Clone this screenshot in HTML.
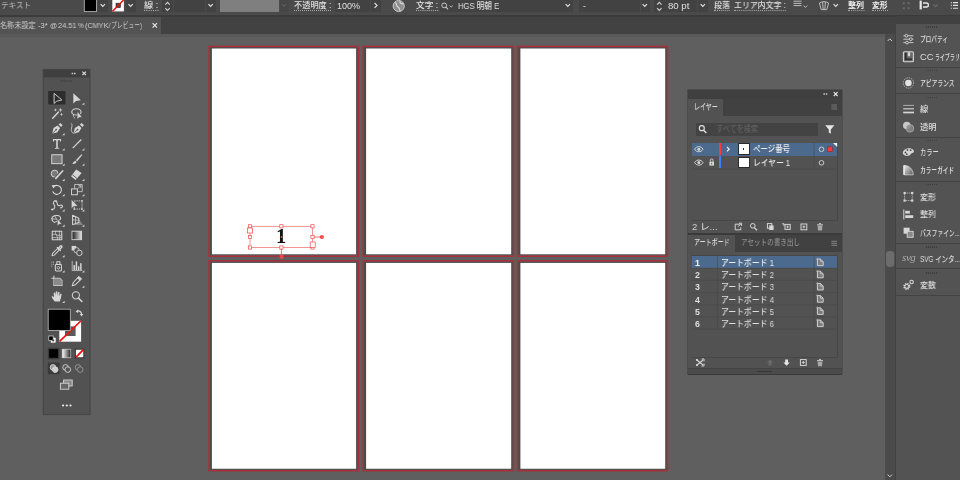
<!DOCTYPE html>
<html>
<head>
<meta charset="utf-8">
<title>Illustrator</title>
<style>
html,body{margin:0;padding:0;}
body{width:960px;height:480px;overflow:hidden;position:relative;background:#5f5f5f;font-family:"Liberation Sans","Noto Sans CJK JP",sans-serif;color:#e0e0e0;font-size:8px;line-height:1;}
.abs{position:absolute;}
.t{position:absolute;white-space:pre;will-change:transform;transform-origin:0 50%;}
#ctrl{left:0;top:0;width:960px;height:16px;background:#4a4a4a;}
#tabbar{left:0;top:16px;width:895px;height:18px;background:#424242;}
#doctab{left:0;top:17px;width:161px;height:17px;background:#535353;}
#understrip{left:0;top:34px;width:885px;height:3px;background:#595959;}
#vscroll{left:885px;top:34px;width:10px;height:446px;background:#4b4b4b;}
#dockgap{left:895px;top:16px;width:65px;height:464px;background:#414141;}
#dock{left:896.3px;top:24px;width:64px;height:456px;background:#535353;}
.u{border-bottom:1px dotted #a8a8a8;height:7.9px;}
</style>
</head>
<body>
<div id="ctrl" class="abs"></div>
<div id="tabbar" class="abs"></div>
<div id="doctab" class="abs"></div>
<div class="abs" style="left:0;top:15.4px;width:960px;height:1.2px;background:#3b3b3b"></div>
<div id="understrip" class="abs"></div>
<div id="vscroll" class="abs"></div>
<div id="dockgap" class="abs"></div>
<div id="dock" class="abs"></div>
<svg class="abs" style="left:0;top:0" width="960" height="480" viewBox="0 0 960 480">
<rect x="209.90" y="47.20" width="147.70" height="208.00" fill="#484b4b"/>
<rect x="209.00" y="46.45" width="149.40" height="209.80" fill="none" stroke="#a92f3b" stroke-width="1.5"/>
<rect x="211.90" y="48.50" width="144.20" height="205.80" fill="#ffffff"/>
<rect x="364.10" y="47.20" width="148.60" height="208.00" fill="#484b4b"/>
<rect x="363.20" y="46.45" width="150.30" height="209.80" fill="none" stroke="#a92f3b" stroke-width="1.5"/>
<rect x="366.10" y="48.50" width="145.10" height="205.80" fill="#ffffff"/>
<rect x="518.40" y="47.20" width="148.30" height="208.00" fill="#484b4b"/>
<rect x="517.50" y="46.45" width="150.00" height="209.80" fill="none" stroke="#a92f3b" stroke-width="1.5"/>
<rect x="520.40" y="48.50" width="144.80" height="205.80" fill="#ffffff"/>
<rect x="209.90" y="261.60" width="147.70" height="208.05" fill="#484b4b"/>
<rect x="209.00" y="260.85" width="149.40" height="209.85" fill="none" stroke="#a92f3b" stroke-width="1.5"/>
<rect x="211.90" y="262.90" width="144.20" height="205.85" fill="#ffffff"/>
<rect x="364.10" y="261.60" width="148.60" height="208.05" fill="#484b4b"/>
<rect x="363.20" y="260.85" width="150.30" height="209.85" fill="none" stroke="#a92f3b" stroke-width="1.5"/>
<rect x="366.10" y="262.90" width="145.10" height="205.85" fill="#ffffff"/>
<rect x="518.40" y="261.60" width="148.30" height="208.05" fill="#484b4b"/>
<rect x="517.50" y="260.85" width="150.00" height="209.85" fill="none" stroke="#a92f3b" stroke-width="1.5"/>
<rect x="520.40" y="262.90" width="144.80" height="205.85" fill="#ffffff"/>
</svg>
<!--FRAME_S--><div id="frame">
<span class="t" style="left:276.4px;top:226.3px;font-family:'Liberation Serif','Noto Serif CJK JP',serif;font-weight:bold;font-size:20.5px;color:#111;line-height:1;">1</span>
<svg class="abs" style="left:240px;top:220px" width="90" height="45" viewBox="240 220 90 45">
<rect x="250" y="226.3" width="62.5" height="21.2" fill="none" stroke="#f04a4a" stroke-width="0.7" opacity="0.85"/><rect x="248.4" y="224.70000000000002" width="3.2" height="3.2" fill="#fff" stroke="#f04a4a" stroke-width="0.7"/><rect x="248.4" y="245.9" width="3.2" height="3.2" fill="#fff" stroke="#f04a4a" stroke-width="0.7"/><rect x="279.79999999999995" y="224.70000000000002" width="3.2" height="3.2" fill="#fff" stroke="#f04a4a" stroke-width="0.7"/><rect x="279.79999999999995" y="245.9" width="3.2" height="3.2" fill="#fff" stroke="#f04a4a" stroke-width="0.7"/><rect x="310.9" y="224.70000000000002" width="3.2" height="3.2" fill="#fff" stroke="#f04a4a" stroke-width="0.7"/><rect x="310.9" y="245.9" width="3.2" height="3.2" fill="#fff" stroke="#f04a4a" stroke-width="0.7"/><rect x="248.4" y="235.4" width="3.2" height="3.2" fill="#fff" stroke="#f04a4a" stroke-width="0.7"/><rect x="310.9" y="235.4" width="3.2" height="3.2" fill="#fff" stroke="#f04a4a" stroke-width="0.7"/><rect x="247.6" y="228" width="4.8" height="5" fill="#fff" stroke="#f04a4a" stroke-width="0.7"/><rect x="310.2" y="242" width="5" height="5.4" fill="#fff" stroke="#f04a4a" stroke-width="0.7"/><path d="M314 237 H320" stroke="#f04a4a" stroke-width="0.8"/><circle cx="321.8" cy="237" r="2.1" fill="#f04a4a"/><path d="M281.4 249 V255" stroke="#f04a4a" stroke-width="0.8"/><rect x="279.8" y="255" width="3.6" height="3.6" fill="#f04a4a"/><circle cx="281.5" cy="237" r="0.9" fill="#f04a4a"/></svg>
</div><!--FRAME_E-->
<!--TOOLS_S--><svg class="abs" style="left:40px;top:66px" width="56" height="354" viewBox="40 66 56 354">
<defs><linearGradient id="tg" x1="0" x2="1" y1="0" y2="0"><stop offset="0" stop-color="#1a1a1a"/><stop offset="1" stop-color="#e8e8e8"/></linearGradient><linearGradient id="tg2" x1="0" x2="1" y1="0" y2="0"><stop offset="0" stop-color="#ffffff"/><stop offset="1" stop-color="#222"/></linearGradient></defs>
<rect x="42.9" y="69" width="47.6" height="346" fill="#555" opacity="0.5"/>
<rect x="43.2" y="69.4" width="46.8" height="345.2" fill="#525252" stroke="#454545" stroke-width="1"/>
<rect x="43.7" y="69.6" width="45.8" height="7.8" fill="#3f3f3f"/>
<path d="M71.6 73.4 h1.6 M74 73.4 h1.6" stroke="#c8c8c8" stroke-width="1.5"/><path d="M82.4 71.6 l3.6 3.6 M86 71.6 l-3.6 3.6" stroke="#e0e0e0" stroke-width="1.2"/>
<path d="M60.5 81 H72" stroke="#3e3e3e" stroke-width="1.6" stroke-dasharray="1 0.8"/>
<rect x="48.2" y="91" width="17.3" height="13.6" rx="0.8" fill="#2d2d2d"/>
<g transform="translate(57.00,98.20)"><g transform="scale(0.97)"><path d="M-3 -5 L-3 5.4 L-0.4 3.2 L5 1.8 Z" fill="none" stroke="#d6d6d6" stroke-width="0.95" stroke-linejoin="round"/></g></g>
<g transform="translate(76.80,98.20)"><g transform="scale(0.97)"><path d="M-3.6 -5.2 L-3.6 5.4 L-0.8 3 L4.2 2 Z" fill="#d6d6d6"/></g><path d="M7.6 4.2 L7.6 6.6 L5.2 6.6 Z" fill="#d6d6d6"/></g>
<g transform="translate(57.00,113.45)"><g transform="scale(0.97)"><path d="M-4.4 5 L1.6 -1.4" stroke="#d6d6d6" stroke-width="1.5" fill="none" stroke-linecap="round"/><path d="M3.6 -5 L3.6 -2.2 M2.2 -3.6 L5 -3.6 M-1.6 -4.4 L-1.6 -2.8 M-2.4 -3.6 L-0.8 -3.6 M4.6 0.2 L4.6 1.8 M3.8 1 L5.4 1" fill="none" stroke="#d6d6d6" stroke-width="0.8" stroke-linejoin="round" stroke-linecap="round"/></g></g>
<g transform="translate(76.80,113.45)"><g transform="scale(0.97)"><ellipse cx="-0.4" cy="-1.6" rx="4.8" ry="3.2" fill="none" stroke="#d6d6d6" stroke-width="1.1" stroke-linejoin="round" stroke-linecap="round"/><path d="M-3.2 0.6 C-4.4 2 -3.4 4 -2 5" fill="none" stroke="#d6d6d6" stroke-width="0.8" stroke-linejoin="round" stroke-linecap="round"/><path d="M0.4 -2 L0.4 6 L2.2 4.2 L5.4 3.6 Z" fill="#d6d6d6" stroke="#525252" stroke-width="0.5"/></g></g>
<g transform="translate(57.00,128.70)"><g transform="scale(0.97)"><path d="M-5 5.2 L-3.6 -0.6 L0.6 -3.4 L3.2 -0.8 L0.4 3.6 Z M1.6 -4.4 L3.4 -6 L5.8 -3.6 L4.2 -1.8 Z" fill="#d6d6d6"/><path d="M-5 5.2 L-1.2 1.2" stroke="#525252" stroke-width="0.8"/><circle cx="-0.9" cy="0.9" r="0.9" fill="#525252"/></g><path d="M7.6 4.2 L7.6 6.6 L5.2 6.6 Z" fill="#d6d6d6"/></g>
<g transform="translate(76.80,128.70)"><g transform="scale(0.97)"><g transform="translate(1.6,0)"><path d="M-5 5.2 L-3.6 -0.6 L0.6 -3.4 L3.2 -0.8 L0.4 3.6 Z M1.6 -4.4 L3.4 -6 L5.8 -3.6 L4.2 -1.8 Z" fill="#d6d6d6"/><path d="M-5 5.2 L-1.2 1.2" stroke="#525252" stroke-width="0.8"/><circle cx="-0.9" cy="0.9" r="0.9" fill="#525252"/></g><path d="M-5.6 -5.4 C-3.4 -4 -6.6 0 -5.4 2.8 C-4.6 4.6 -3.6 4.6 -3 4.4" fill="none" stroke="#d6d6d6" stroke-width="0.8" stroke-linejoin="round" stroke-linecap="round"/></g></g>
<g transform="translate(57.00,143.95)"><g transform="scale(0.97)"><path d="M-4.2 -5 H4.2 V-2.6 H3.3 L3 -3.9 H0.8 V3.8 L2.2 4.1 V5 H-2.2 V4.1 L-0.8 3.8 V-3.9 H-3 L-3.3 -2.6 H-4.2 Z" fill="#d6d6d6"/></g><path d="M7.6 4.2 L7.6 6.6 L5.2 6.6 Z" fill="#d6d6d6"/></g>
<g transform="translate(76.80,143.95)"><g transform="scale(0.97)"><path d="M-4.2 4.4 L4.6 -4.6" stroke="#d6d6d6" stroke-width="1.2" fill="none"/></g><path d="M7.6 4.2 L7.6 6.6 L5.2 6.6 Z" fill="#d6d6d6"/></g>
<g transform="translate(57.00,159.20)"><g transform="scale(0.97)"><rect x="-5.4" y="-4.6" width="10.6" height="9.2" fill="#7a7a7a" stroke="#d6d6d6" stroke-width="1"/></g><path d="M7.6 4.2 L7.6 6.6 L5.2 6.6 Z" fill="#d6d6d6"/></g>
<g transform="translate(76.80,159.20)"><g transform="scale(0.97)"><path d="M4.8 -5.2 L5.6 -4.4 L0.4 2.2 L-1 1 Z" fill="#d6d6d6"/><path d="M-1.6 1.6 L-0.2 3 C-1 4.8 -3 5.2 -5 4.8 C-3.6 4 -3.4 2.4 -1.6 1.6 Z" fill="#d6d6d6"/></g><path d="M7.6 4.2 L7.6 6.6 L5.2 6.6 Z" fill="#d6d6d6"/></g>
<g transform="translate(57.00,174.45)"><g transform="scale(0.97)"><circle cx="-2.4" cy="-0.8" r="3.6" fill="#7a7a7a" stroke="#d6d6d6" stroke-width="1"/><path d="M-1.6 4.4 L6 -3.6" stroke="#525252" stroke-width="3.4" fill="none"/><path d="M-1.2 4 L5.8 -3.6" stroke="#d6d6d6" stroke-width="1.7" fill="none" stroke-linecap="round"/></g><path d="M7.6 4.2 L7.6 6.6 L5.2 6.6 Z" fill="#d6d6d6"/></g>
<g transform="translate(76.80,174.45)"><g transform="scale(0.97)"><path d="M-0.6 -5.2 L5 -1.4 L-1.2 5.8 L-6 1.8 Z" fill="#d6d6d6"/><path d="M-4.6 0.2 L0.2 4.2" stroke="#525252" stroke-width="0.9"/></g><path d="M7.6 4.2 L7.6 6.6 L5.2 6.6 Z" fill="#d6d6d6"/></g>
<g transform="translate(57.00,189.70)"><g transform="scale(0.97)"><path d="M-3.2 -3.2 A4.6 4.6 0 1 1 -4.2 2.2" fill="none" stroke="#d6d6d6" stroke-width="1.1" stroke-linejoin="round" stroke-linecap="round"/><path d="M-5.6 -4.6 L-1.6 -4.8 L-3.6 -1.2 Z" fill="#d6d6d6"/></g><path d="M7.6 4.2 L7.6 6.6 L5.2 6.6 Z" fill="#d6d6d6"/></g>
<g transform="translate(76.80,189.70)"><g transform="scale(0.97)"><rect x="-1.8" y="-5.4" width="7.4" height="7.4" fill="none" stroke="#d6d6d6" stroke-width="0.8" stroke-linejoin="round" stroke-linecap="round"/><rect x="-5.4" y="-0.8" width="6" height="6" fill="#525252" stroke="#d6d6d6" stroke-width="1"/><path d="M1.4 -1.4 L4 -4 M2 -4.2 H4.2 V-2" fill="none" stroke="#d6d6d6" stroke-width="0.8" stroke-linejoin="round" stroke-linecap="round"/></g><path d="M7.6 4.2 L7.6 6.6 L5.2 6.6 Z" fill="#d6d6d6"/></g>
<g transform="translate(57.00,204.95)"><g transform="scale(0.97)"><path d="M-5 4.6 C-2 5 -1.6 1.2 -3.2 -0.6 C-4.6 -2.4 -2.8 -5 -1 -4 C1 -2.8 -0.6 0 1.4 0.6 C3.4 1.2 4.4 -0.8 5.4 0.6 C6.2 2 4.6 3.4 3.4 3" fill="none" stroke="#d6d6d6" stroke-width="1.1" stroke-linejoin="round" stroke-linecap="round"/><circle cx="-5" cy="4.6" r="1" fill="#d6d6d6"/><circle cx="-1" cy="-4" r="0.9" fill="#d6d6d6"/></g><path d="M7.6 4.2 L7.6 6.6 L5.2 6.6 Z" fill="#d6d6d6"/></g>
<g transform="translate(76.80,204.95)"><g transform="scale(0.97)"><rect x="-2.6" y="-4.2" width="8" height="8.4" fill="none" stroke="#d6d6d6" stroke-width="0.9" stroke-dasharray="1.4 0.9"/><path d="M-5.6 -5.6 L-5.6 3.6 L-3.2 1.6 L1 1 Z" fill="#d6d6d6" stroke="#525252" stroke-width="0.5"/><rect x="-3.4" y="3.4" width="1.6" height="1.6" fill="#d6d6d6"/><rect x="4.6" y="3.4" width="1.6" height="1.6" fill="#d6d6d6"/><rect x="4.6" y="-5" width="1.6" height="1.6" fill="#d6d6d6"/></g><path d="M7.6 4.2 L7.6 6.6 L5.2 6.6 Z" fill="#d6d6d6"/></g>
<g transform="translate(57.00,220.20)"><g transform="scale(0.92)"><path d="M-5.6 -1.8 C-5.6 -4.4 -2 -5.6 1 -5 C4 -4.4 4.6 -2 3.4 -0.6 L-2.6 2.4 C-4.6 1.6 -5.6 0 -5.6 -1.8 Z" fill="none" stroke="#d6d6d6" stroke-width="1.1" stroke-linejoin="round" stroke-linecap="round"/><path d="M-2.4 -4.8 L-0.2 -0.8 M-5.4 -1.6 L-0.4 -1" fill="none" stroke="#d6d6d6" stroke-width="0.8" stroke-linejoin="round" stroke-linecap="round"/><path d="M0.4 -1.6 L0.4 6.2 L2.2 4.4 L5.2 4 Z" fill="#d6d6d6" stroke="#525252" stroke-width="0.5"/></g><path d="M7.6 4.2 L7.6 6.6 L5.2 6.6 Z" fill="#d6d6d6"/></g>
<g transform="translate(76.80,220.20)"><g transform="scale(0.92)"><path d="M-4.6 -5.4 L-4.6 4.8 L2.2 2.2 L2.2 -2.2 Z" fill="none" stroke="#d6d6d6" stroke-width="1.1" stroke-linejoin="round" stroke-linecap="round"/><path d="M-1.4 -3.8 L-1.4 3.6 M-4.6 -0.4 L2.2 0" fill="none" stroke="#d6d6d6" stroke-width="0.8" stroke-linejoin="round" stroke-linecap="round"/><path d="M-4.6 4.8 L6 4.8 L2.2 -0.4 M-2 3.8 L4.8 3.4 M0.4 3 L3.8 2.2" stroke="#d6d6d6" stroke-width="0.6" fill="none" opacity="0.75"/></g><path d="M7.6 4.2 L7.6 6.6 L5.2 6.6 Z" fill="#d6d6d6"/></g>
<g transform="translate(57.00,235.45)"><g transform="scale(0.92)"><rect x="-5.2" y="-4.6" width="10.4" height="9.2" fill="none" stroke="#d6d6d6" stroke-width="1.1" stroke-linejoin="round" stroke-linecap="round"/><path d="M-5.2 -1 C-2 -3 1 2 5.2 -0.6 M-1.4 -4.6 C-3 -1 2 1 0.4 4.6 M-5.2 2.6 C-2 1.4 0 3.6 5.2 2 M2.6 -4.6 C1.6 -2 4.2 1 2.8 4.6" fill="none" stroke="#d6d6d6" stroke-width="0.8" stroke-linejoin="round" stroke-linecap="round"/></g></g>
<g transform="translate(76.80,235.45)"><g transform="scale(0.92)"><rect x="-5.2" y="-4.6" width="10.4" height="9.2" fill="url(#tg)" stroke="#d6d6d6" stroke-width="1"/></g></g>
<g transform="translate(57.00,250.70)"><g transform="scale(0.92)"><path d="M-5.4 5.4 L-4.8 3 L0.6 -2.4 L2.4 -0.6 L-3 4.8 Z" fill="none" stroke="#d6d6d6" stroke-width="1.1" stroke-linejoin="round" stroke-linecap="round"/><path d="M0.4 -3.6 L3.6 -0.4 M1.6 -2.6 L3.6 -5 C4.6 -6 6 -4.6 5 -3.6 L2.8 -1.4" stroke="#d6d6d6" stroke-width="1.5" fill="none" stroke-linecap="round"/></g><path d="M7.6 4.2 L7.6 6.6 L5.2 6.6 Z" fill="#d6d6d6"/></g>
<g transform="translate(76.80,250.70)"><g transform="scale(0.92)"><rect x="-5.6" y="-5.2" width="5" height="5" fill="#d6d6d6"/><circle cx="-0.2" cy="-0.4" r="2.9" fill="#525252" stroke="#d6d6d6" stroke-width="0.9"/><circle cx="2.8" cy="2.4" r="3" fill="#525252" stroke="#d6d6d6" stroke-width="1"/></g></g>
<g transform="translate(57.00,265.95)"><g transform="scale(0.92)"><rect x="-1.8" y="-1.6" width="6.6" height="7" rx="1" fill="none" stroke="#d6d6d6" stroke-width="1.1" stroke-linejoin="round" stroke-linecap="round"/><rect x="-0.2" y="-4.6" width="3.4" height="3" fill="none" stroke="#d6d6d6" stroke-width="1.1" stroke-linejoin="round" stroke-linecap="round"/><circle cx="1.5" cy="2" r="1.4" fill="none" stroke="#d6d6d6" stroke-width="0.8" stroke-linejoin="round" stroke-linecap="round"/><path d="M-5.6 -4.6 V-3.6 M-5.6 -2.4 V-1.4 M-5.6 -0.2 V0.8 M-3.8 -4.6 V-3.6 M-3.8 -2.4 V-1.4" stroke="#d6d6d6" stroke-width="0.9" fill="none"/></g><path d="M7.6 4.2 L7.6 6.6 L5.2 6.6 Z" fill="#d6d6d6"/></g>
<g transform="translate(76.80,265.95)"><g transform="scale(0.92)"><path d="M-5 -5 V5 H5.6" fill="none" stroke="#d6d6d6" stroke-width="0.8" stroke-linejoin="round" stroke-linecap="round"/><rect x="-3.6" y="-1" width="1.6" height="5.4" fill="#d6d6d6"/><rect x="-1.2" y="-5" width="1.6" height="9.4" fill="#d6d6d6"/><rect x="1.2" y="0.4" width="1.6" height="4" fill="#d6d6d6"/><rect x="3.6" y="-3" width="1.6" height="7.4" fill="#d6d6d6"/></g><path d="M7.6 4.2 L7.6 6.6 L5.2 6.6 Z" fill="#d6d6d6"/></g>
<g transform="translate(57.00,281.20)"><g transform="scale(0.92)"><path d="M-3.4 -5.6 V4.8 H5.4 M-5.6 -3.2 H3 L5.4 -0.8 V4.8" fill="none" stroke="#d6d6d6" stroke-width="1.1" stroke-linejoin="round" stroke-linecap="round"/><path d="M-3 -2.6 H2.6 L4.8 -0.4 V4.4 H-3 Z" fill="#8a8a8a"/></g></g>
<g transform="translate(76.80,281.20)"><g transform="scale(0.92)"><path d="M-5 5 L-3.8 1.4 L2.2 -5 L5 -2.6 L-1.4 3.8 Z" fill="none" stroke="#d6d6d6" stroke-width="1.1" stroke-linejoin="round" stroke-linecap="round"/><path d="M0.6 -3.4 L3.4 -1" fill="none" stroke="#d6d6d6" stroke-width="0.8" stroke-linejoin="round" stroke-linecap="round"/><path d="M2.2 -5 L5 -2.6 L3.4 -1 L0.6 -3.4 Z" fill="#d6d6d6"/></g><path d="M7.6 4.2 L7.6 6.6 L5.2 6.6 Z" fill="#d6d6d6"/></g>
<g transform="translate(57.00,296.45)"><g transform="scale(0.92)"><path d="M-2.6 5.4 C-3.6 3.6 -5.8 1.4 -5.8 0.2 C-5.4 -0.8 -4 -0.2 -3.2 1 L-3.6 -3.6 C-3.4 -4.8 -2.2 -4.6 -2 -3.6 L-1.6 -0.8 L-1.4 -5 C-1 -6 0.2 -6 0.4 -5 L0.4 -0.8 L1.2 -4.4 C1.6 -5.4 2.8 -5 2.8 -4 L2.4 -0.2 L3.6 -2.6 C4.2 -3.4 5.2 -2.8 5 -2 C4.4 0.4 4.2 3 3 5.4 Z" fill="#d6d6d6"/></g><path d="M7.6 4.2 L7.6 6.6 L5.2 6.6 Z" fill="#d6d6d6"/></g>
<g transform="translate(76.80,296.45)"><g transform="scale(0.92)"><circle cx="-1" cy="-1.2" r="3.9" fill="none" stroke="#d6d6d6" stroke-width="1.1" stroke-linejoin="round" stroke-linecap="round"/><path d="M1.8 1.8 L5.6 5.6" stroke="#d6d6d6" stroke-width="1.6" fill="none" stroke-linecap="round"/></g></g>
<rect x="59.3" y="320.8" width="21.8" height="20.9" fill="#ffffff"/><rect x="65" y="326.4" width="10.6" height="9.6" fill="#5a5a5a"/><path d="M59.6 341.4 L80.8 321" stroke="#f01010" stroke-width="1.7"/><rect x="48.2" y="309.2" width="22.1" height="21.3" fill="#000" stroke="#bdbdbd" stroke-width="0.8"/>
<path d="M76.6 311.6 C79 310 81.6 311.6 81.6 314.6" fill="none" stroke="#d6d6d6" stroke-width="1.2"/><path d="M75.6 311.8 L78 309.6 L78.2 313 Z M79.8 314 L83.4 314 L81.6 316.4 Z" fill="#d6d6d6"/><rect x="51" y="338" width="4.4" height="4.4" fill="#fff" stroke="#fff" stroke-width="0.5"/><rect x="48.8" y="336" width="4.4" height="4.4" fill="#000" stroke="#ddd" stroke-width="0.7"/><rect x="52.2" y="339.4" width="2" height="2" fill="#444"/>
<rect x="47.8" y="347.8" width="11.6" height="11.4" rx="1" fill="#3a3a3a"/><rect x="49.2" y="349.2" width="8.8" height="8.6" fill="#000"/><rect x="62.2" y="349.2" width="8.6" height="8.6" fill="url(#tg2)" stroke="#ddd" stroke-width="0.6"/><rect x="75.4" y="349.2" width="8.4" height="8.6" fill="#fff" stroke="#222" stroke-width="0.8"/><path d="M75.8 357.4 L83.4 349.6" stroke="#f01010" stroke-width="1.8"/>
<rect x="47.8" y="362.6" width="11.8" height="11.6" rx="1" fill="#3a3a3a"/><circle cx="53" cy="367.4" r="2.8" fill="#999" stroke="#d6d6d6" stroke-width="0.9"/><circle cx="55.2" cy="369.6" r="2.8" fill="#cfcfcf" stroke="#d6d6d6" stroke-width="0.9"/><circle cx="65.6" cy="367.4" r="2.8" fill="none" stroke="#d6d6d6" stroke-width="0.9"/><circle cx="67.8" cy="369.6" r="2.8" fill="#525252" stroke="#d6d6d6" stroke-width="0.9"/><circle cx="78" cy="367.4" r="2.8" fill="none" stroke="#9a9a9a" stroke-width="0.9"/><circle cx="80.2" cy="369.6" r="2.8" fill="#525252" stroke="#9a9a9a" stroke-width="0.9"/>
<rect x="63.6" y="380" width="8.6" height="6" fill="#888" stroke="#d6d6d6" stroke-width="0.9"/><rect x="60.4" y="383.2" width="8.4" height="6" fill="#666" stroke="#d6d6d6" stroke-width="0.9"/>
<circle cx="63.1" cy="405.5" r="1.1" fill="#eee"/><circle cx="66.8" cy="405.5" r="1.1" fill="#eee"/><circle cx="70.5" cy="405.5" r="1.1" fill="#eee"/>
</svg><!--TOOLS_E-->
<!--LAYERS_S--><div id="panels">
<div class="abs" style="left:687px;top:89.4px;width:155.40px;height:285.60px;background:rgba(70,70,70,0.3);"></div>
<div class="abs" style="left:687.6px;top:90px;width:154.00px;height:284.40px;background:#525252;box-shadow:0 0 0 0.6px #474747"></div>
<div class="abs" style="left:687.6px;top:90px;width:154.00px;height:8.60px;background:#3f3f3f;"></div>
<div class="abs" style="left:723px;top:98.6px;width:118.60px;height:17.00px;background:#414141;"></div>
<div class="abs" style="left:696px;top:122.5px;width:122.00px;height:13.50px;background:#434343;"></div>
<div class="abs" style="left:690.6px;top:141.6px;width:147.20px;height:79.20px;background:#474747;"></div>
<div class="abs" style="left:691.4px;top:142.4px;width:145.80px;height:77.60px;background:#525252;"></div>
<div class="abs" style="left:691.5px;top:142.6px;width:145.70px;height:13.00px;background:#4c6a8d;"></div>
<div class="abs" style="left:738.2px;top:143.4px;width:11.40px;height:11.20px;background:#2a2a2a;"></div>
<div class="abs" style="left:739.2px;top:144.4px;width:9.40px;height:9.20px;background:#fff;"></div>
<div class="abs" style="left:738.2px;top:156.8px;width:11.40px;height:11.20px;background:#2a2a2a;"></div>
<div class="abs" style="left:739.2px;top:157.8px;width:9.40px;height:9.20px;background:#fff;"></div>
<div class="abs" style="left:743.4px;top:148px;width:1.00px;height:2.00px;background:#333;"></div>
<div class="abs" style="left:719.2px;top:143.2px;width:2.20px;height:12.00px;background:#ff3c3c;"></div>
<div class="abs" style="left:719.2px;top:156.4px;width:2.20px;height:12.00px;background:#3f7fff;"></div>
<div class="abs" style="left:687.6px;top:233px;width:154.00px;height:2.20px;background:#3a3a3a;"></div>
<div class="abs" style="left:735px;top:235.2px;width:106.60px;height:16.40px;background:#414141;"></div>
<div class="abs" style="left:690.6px;top:255.2px;width:147.20px;height:102.40px;background:#474747;"></div>
<div class="abs" style="left:691.4px;top:256px;width:145.80px;height:100.80px;background:#525252;"></div>
<div class="abs" style="left:691.5px;top:256.1px;width:145.70px;height:11.70px;background:#4c6a8d;"></div>
<div class="abs" style="left:687.6px;top:368.6px;width:154.00px;height:5.80px;background:#4b4b4b;"></div>
<div class="abs" style="left:687.6px;top:368.2px;width:154.00px;height:0.80px;background:#444;"></div>
<div class="abs" style="left:687.6px;top:373.6px;width:154.00px;height:0.90px;background:#3a3a3a;"></div>
<div class="abs" style="left:757px;top:370.8px;width:15.00px;height:1.20px;background:#353535;"></div>
<span class="t" style="left:693.5px;top:102.7px;font-size:8.8px;transform:scaleX(0.681);font-weight:500;color:#dcdcdc;">レイヤー</span>
<span class="t" style="left:715.6px;top:125.1px;font-size:8.8px;transform:scaleX(0.815);font-weight:500;color:#606060;">すべてを検索</span>
<span class="t" style="left:752.5px;top:145.3px;font-size:8.8px;transform:scaleX(0.844);font-weight:500;color:#f0f0f0;">ページ番号</span>
<span class="t" style="left:752.5px;top:158.7px;font-size:8.8px;transform:scaleX(0.880);font-weight:500;color:#e6e6e6;">レイヤー 1</span>
<span class="t" style="left:691.8px;top:223.1px;font-size:8.8px;transform:scaleX(1.090);font-weight:500;color:#cfcfcf;">2 レ...</span>
<span class="t" style="left:694.2px;top:238.1px;font-size:8.4px;transform:scaleX(0.717);font-weight:500;color:#dcdcdc;">アートボード</span>
<span class="t" style="left:740.5px;top:238.1px;font-size:8.4px;transform:scaleX(0.785);font-weight:500;color:#8c8c8c;">アセットの書き出し</span>
<span class="t" style="left:695.4px;top:259.0px;font-size:8.8px;font-weight:700;color:#f0f0f0;">1</span>
<span class="t" style="left:721px;top:259.0px;font-size:8.8px;transform:scaleX(0.888);font-weight:500;color:#f0f0f0;">アートボード 1</span>
<span class="t" style="left:695.4px;top:271.2px;font-size:8.8px;font-weight:700;color:#dedede;">2</span>
<span class="t" style="left:721px;top:271.2px;font-size:8.8px;transform:scaleX(0.888);font-weight:500;color:#dedede;">アートボード 2</span>
<span class="t" style="left:695.4px;top:283.4px;font-size:8.8px;font-weight:700;color:#dedede;">3</span>
<span class="t" style="left:721px;top:283.4px;font-size:8.8px;transform:scaleX(0.888);font-weight:500;color:#dedede;">アートボード 3</span>
<span class="t" style="left:695.4px;top:295.6px;font-size:8.8px;font-weight:700;color:#dedede;">4</span>
<span class="t" style="left:721px;top:295.6px;font-size:8.8px;transform:scaleX(0.888);font-weight:500;color:#dedede;">アートボード 4</span>
<span class="t" style="left:695.4px;top:307.8px;font-size:8.8px;font-weight:700;color:#dedede;">5</span>
<span class="t" style="left:721px;top:307.8px;font-size:8.8px;transform:scaleX(0.888);font-weight:500;color:#dedede;">アートボード 5</span>
<span class="t" style="left:695.4px;top:320.0px;font-size:8.8px;font-weight:700;color:#dedede;">6</span>
<span class="t" style="left:721px;top:320.0px;font-size:8.8px;transform:scaleX(0.888);font-weight:500;color:#dedede;">アートボード 6</span>
<svg class="abs" style="left:680px;top:85px" width="170" height="295" viewBox="680 85 170 295">
<path d="M823.4 94 h1.5 M825.8 94 h1.5" stroke="#c8c8c8" stroke-width="1.5"/><path d="M833.8 92.2 l3.8 3.8 M837.6 92.2 l-3.8 3.8" stroke="#e6e6e6" stroke-width="1.2"/><path d="M831.4 105 h5.6 M831.4 107 h5.6 M831.4 109 h5.6" stroke="#777" stroke-width="1.1"/><path d="M831.4 241.4 h5.6 M831.4 243.4 h5.6 M831.4 245.4 h5.6" stroke="#777" stroke-width="1.1"/><circle cx="701.8" cy="128.2" r="2.5" fill="none" stroke="#e0e0e0" stroke-width="1.2"/><path d="M703.6 130.2 L706.4 133" stroke="#e0e0e0" stroke-width="1.4"/><path d="M825.2 125.2 H834.4 L830.8 129.4 V133.8 L828.8 132.4 V129.4 Z" fill="#e6e6e6"/><path d="M694.6 149.2 C696.4 145.79999999999998 701.2 145.79999999999998 703 149.2 C701.2 152.6 696.4 152.6 694.6 149.2 Z" fill="none" stroke="#d6d6d6" stroke-width="1"/><circle cx="698.8" cy="149.2" r="1.5" fill="#d6d6d6"/><path d="M694.6 162.6 C696.4 159.2 701.2 159.2 703 162.6 C701.2 166.0 696.4 166.0 694.6 162.6 Z" fill="none" stroke="#d6d6d6" stroke-width="1"/><circle cx="698.8" cy="162.6" r="1.5" fill="#d6d6d6"/><rect x="709.4" y="161.6" width="4.6" height="4" fill="#d6d6d6"/><path d="M710.4 161.6 V160.2 A1.3 1.3 0 0 1 713 160.2 V161.6" fill="none" stroke="#d6d6d6" stroke-width="0.9"/><rect x="711.3" y="162.8" width="0.8" height="1.6" fill="#525252"/><path d="M727 147 L729.2 149.2 L727 151.4" fill="none" stroke="#f0f0f0" stroke-width="1.2"/><circle cx="821.5" cy="149.3" r="2.3" fill="none" stroke="#d6d6d6" stroke-width="0.9"/><circle cx="821.5" cy="162.8" r="2.3" fill="none" stroke="#d6d6d6" stroke-width="0.9"/><rect x="827.3" y="146.9" width="5.2" height="4.8" fill="#f83c3c" stroke="#5a2020" stroke-width="0.4"/><path d="M833 143 H837.2 V147 Z" fill="#f0f0f0"/><path d="M814 142.6 V169 M814 256.6 V329.6 M717.4 256.6 V329.6" stroke="#474747" stroke-width="0.6"/><path d="M691.5 169.2 H837.2" stroke="#474747" stroke-width="0.6"/><path d="M691.5 268.2 H837.2" stroke="#484848" stroke-width="0.6"/><path d="M691.5 280.4 H837.2" stroke="#484848" stroke-width="0.6"/><path d="M691.5 292.6 H837.2" stroke="#484848" stroke-width="0.6"/><path d="M691.5 304.8 H837.2" stroke="#484848" stroke-width="0.6"/><path d="M691.5 317.0 H837.2" stroke="#484848" stroke-width="0.6"/><path d="M691.5 329.2 H837.2" stroke="#484848" stroke-width="0.6"/><g transform="translate(0,-0.6)"><path d="M739.6 224.8 H735.2 V230.4 H740.8 V228 M738 227.4 L741.4 224 M739 223.8 H741.6 V226.4" fill="none" stroke="#d6d6d6" stroke-width="1"/><circle cx="752.8" cy="226.4" r="2.3" fill="none" stroke="#d6d6d6" stroke-width="1"/><path d="M754.4 228.2 L757 230.8" stroke="#d6d6d6" stroke-width="1.3"/><rect x="767.4" y="224.2" width="4.4" height="4.6" fill="none" stroke="#d6d6d6" stroke-width="1"/><rect x="769.2" y="226" width="4.4" height="4.6" fill="#d6d6d6"/><path d="M782.2 224.4 H784 V226.6" fill="none" stroke="#d6d6d6" stroke-width="1"/><rect x="785" y="225" width="5.2" height="5" fill="none" stroke="#d6d6d6" stroke-width="1"/><path d="M786.2 227.5 H789 M787.6 226.1 V228.9" stroke="#d6d6d6" stroke-width="0.8"/><rect x="801" y="224.6" width="5.8" height="5.8" fill="none" stroke="#d6d6d6" stroke-width="1"/><path d="M802.4 227.5 H805.4 M803.9 226 V229" stroke="#d6d6d6" stroke-width="0.9"/><path d="M817 225.4 H823 M819 224.20000000000002 H821" stroke="#d6d6d6" stroke-width="0.9"/><path d="M817.6 226.20000000000002 H822.4 L822 231.0 H818 Z" fill="#a8a8a8"/></g><path d="M817.4 259.0 H820.4 L823.2 261.7 V265.6 H817.4 Z" fill="#7c7c7c" stroke="#dadada" stroke-width="0.9"/><path d="M820.4 259.0 V261.7 H823.2" fill="none" stroke="#dadada" stroke-width="0.7"/><path d="M816 259.0 H817.4 M817.4 257.7 V259.0" stroke="#bbb" stroke-width="0.6"/><path d="M817.4 271.2 H820.4 L823.2 273.9 V277.8 H817.4 Z" fill="#7c7c7c" stroke="#dadada" stroke-width="0.9"/><path d="M820.4 271.2 V273.9 H823.2" fill="none" stroke="#dadada" stroke-width="0.7"/><path d="M816 271.2 H817.4 M817.4 269.9 V271.2" stroke="#bbb" stroke-width="0.6"/><path d="M817.4 283.4 H820.4 L823.2 286.09999999999997 V290.0 H817.4 Z" fill="#7c7c7c" stroke="#dadada" stroke-width="0.9"/><path d="M820.4 283.4 V286.09999999999997 H823.2" fill="none" stroke="#dadada" stroke-width="0.7"/><path d="M816 283.4 H817.4 M817.4 282.09999999999997 V283.4" stroke="#bbb" stroke-width="0.6"/><path d="M817.4 295.59999999999997 H820.4 L823.2 298.29999999999995 V302.2 H817.4 Z" fill="#7c7c7c" stroke="#dadada" stroke-width="0.9"/><path d="M820.4 295.59999999999997 V298.29999999999995 H823.2" fill="none" stroke="#dadada" stroke-width="0.7"/><path d="M816 295.59999999999997 H817.4 M817.4 294.29999999999995 V295.59999999999997" stroke="#bbb" stroke-width="0.6"/><path d="M817.4 307.8 H820.4 L823.2 310.5 V314.40000000000003 H817.4 Z" fill="#7c7c7c" stroke="#dadada" stroke-width="0.9"/><path d="M820.4 307.8 V310.5 H823.2" fill="none" stroke="#dadada" stroke-width="0.7"/><path d="M816 307.8 H817.4 M817.4 306.5 V307.8" stroke="#bbb" stroke-width="0.6"/><path d="M817.4 320.0 H820.4 L823.2 322.7 V326.6 H817.4 Z" fill="#7c7c7c" stroke="#dadada" stroke-width="0.9"/><path d="M820.4 320.0 V322.7 H823.2" fill="none" stroke="#dadada" stroke-width="0.7"/><path d="M816 320.0 H817.4 M817.4 318.7 V320.0" stroke="#bbb" stroke-width="0.6"/><path d="M697 360 L703 365 M697 365 L703 360" stroke="#d6d6d6" stroke-width="1.1"/><path d="M701.6 359 H704 V361.4 M701.6 366 H704 V363.6" fill="none" stroke="#d6d6d6" stroke-width="1"/><rect x="696" y="359" width="1.8" height="1.8" fill="#d6d6d6"/><rect x="696" y="364.2" width="1.8" height="1.8" fill="#d6d6d6"/><path d="M770 359.2 L773.2 362.6 H771.4 V365.6 H768.6 V362.6 H766.8 Z" fill="#6a6a6a"/><path d="M786.6 365.8 L789.8 362.4 H788 V359.4 H785.2 V362.4 H783.4 Z" fill="#e6e6e6"/><rect x="800.4" y="359.6" width="5.8" height="5.8" fill="none" stroke="#d6d6d6" stroke-width="1"/><path d="M801.8 362.5 H804.8 M803.3 361 V364" stroke="#d6d6d6" stroke-width="0.9"/><path d="M817 360.6 H823 M819 359.40000000000003 H821" stroke="#d6d6d6" stroke-width="0.9"/><path d="M817.6 361.40000000000003 H822.4 L822 366.20000000000005 H818 Z" fill="#a8a8a8"/></svg>
</div><!--LAYERS_E-->
<!--ARTBOARDS-->
<!--DOCK_S--><div id="dockitems">
<div class="abs" style="left:896.3px;top:66.7px;width:63.70px;height:1.00px;background:#434343;"></div>
<div class="abs" style="left:896.3px;top:92.8px;width:63.70px;height:1.00px;background:#434343;"></div>
<div class="abs" style="left:896.3px;top:137.0px;width:63.70px;height:1.00px;background:#434343;"></div>
<div class="abs" style="left:896.3px;top:180.5px;width:63.70px;height:1.00px;background:#434343;"></div>
<div class="abs" style="left:896.3px;top:242.7px;width:63.70px;height:1.00px;background:#434343;"></div>
<div class="abs" style="left:896.3px;top:268.3px;width:63.70px;height:1.00px;background:#434343;"></div>
<div class="abs" style="left:896.3px;top:295.0px;width:63.70px;height:1.00px;background:#434343;"></div>
<div class="abs" style="left:926px;top:26.3px;width:12px;height:1.4px;background:repeating-linear-gradient(90deg,#3d3d3d 0 1.2px,transparent 1.2px 2px)"></div>
<div class="abs" style="left:926px;top:70.1px;width:12px;height:1.4px;background:repeating-linear-gradient(90deg,#3d3d3d 0 1.2px,transparent 1.2px 2px)"></div>
<div class="abs" style="left:926px;top:96.5px;width:12px;height:1.4px;background:repeating-linear-gradient(90deg,#3d3d3d 0 1.2px,transparent 1.2px 2px)"></div>
<div class="abs" style="left:926px;top:140.1px;width:12px;height:1.4px;background:repeating-linear-gradient(90deg,#3d3d3d 0 1.2px,transparent 1.2px 2px)"></div>
<div class="abs" style="left:926px;top:183.9px;width:12px;height:1.4px;background:repeating-linear-gradient(90deg,#3d3d3d 0 1.2px,transparent 1.2px 2px)"></div>
<div class="abs" style="left:926px;top:246.3px;width:12px;height:1.4px;background:repeating-linear-gradient(90deg,#3d3d3d 0 1.2px,transparent 1.2px 2px)"></div>
<div class="abs" style="left:926px;top:272.3px;width:12px;height:1.4px;background:repeating-linear-gradient(90deg,#3d3d3d 0 1.2px,transparent 1.2px 2px)"></div>
<span class="t" style="left:919.8px;top:35.2px;font-size:8.3px;transform:scaleX(0.680);font-weight:500;color:#dedede;">プロパティ</span>
<span class="t" style="left:919.8px;top:79.0px;font-size:8.3px;transform:scaleX(0.696);font-weight:500;color:#dedede;">アピアランス</span>
<span class="t" style="left:919.8px;top:105.2px;font-size:8.3px;transform:scaleX(0.975);font-weight:500;color:#dedede;">線</span>
<span class="t" style="left:919.8px;top:123.0px;font-size:8.3px;transform:scaleX(0.975);font-weight:500;color:#dedede;">透明</span>
<span class="t" style="left:919.8px;top:148.0px;font-size:8.3px;transform:scaleX(0.758);font-weight:500;color:#dedede;">カラー</span>
<span class="t" style="left:919.8px;top:166.2px;font-size:8.3px;transform:scaleX(0.683);font-weight:500;color:#dedede;">カラーガイド</span>
<span class="t" style="left:919.8px;top:192.8px;font-size:8.3px;transform:scaleX(0.963);font-weight:500;color:#dedede;">変形</span>
<span class="t" style="left:919.8px;top:210.4px;font-size:8.3px;transform:scaleX(0.963);font-weight:500;color:#dedede;">整列</span>
<span class="t" style="left:919.8px;top:228.5px;font-size:8.3px;transform:scaleX(0.697);font-weight:500;color:#dedede;">パスファイン...</span>
<span class="t" style="left:919.8px;top:254.8px;font-size:8.3px;transform:scaleX(0.773);font-weight:500;color:#dedede;">SVG インタ...</span>
<span class="t" style="left:919.8px;top:281.0px;font-size:8.3px;transform:scaleX(0.963);font-weight:500;color:#dedede;">変数</span>
<span class="t" style="left:919.8px;top:52.7px;font-size:8.3px;transform:scaleX(1.119);font-weight:500;color:#dedede;">CC</span>
<span class="t" style="left:935px;top:52.7px;font-size:8.3px;transform:scaleX(0.595);font-weight:500;color:#dedede;">ライブラリ</span>
<svg class="abs" style="left:880px;top:16px" width="80" height="464" viewBox="880 16 80 464">
<rect x="886" y="251" width="8.2" height="16" rx="3.4" fill="#6c6c6c"/><path d="M887.6 41 L889.8 38.8 L892 41" fill="none" stroke="#cfcfcf" stroke-width="1"/><path d="M887.6 474.6 L889.8 476.8 L892 474.6" fill="none" stroke="#cfcfcf" stroke-width="1"/><path d="M903.4 35.800000000000004 H913.4 M903.4 39.2 H913.4 M903.4 42.6 H913.4" stroke="#d6d6d6" stroke-width="0.9"/><circle cx="906.4" cy="35.800000000000004" r="1.4" fill="#525252" stroke="#d6d6d6" stroke-width="0.9"/><circle cx="910.8" cy="39.2" r="1.4" fill="#525252" stroke="#d6d6d6" stroke-width="0.9"/><circle cx="907.0" cy="42.6" r="1.4" fill="#525252" stroke="#d6d6d6" stroke-width="0.9"/><rect x="903.4" y="51.7" width="10" height="10" rx="1" fill="#666" stroke="#d6d6d6" stroke-width="1.1"/><path d="M905.8 52.7 V59.300000000000004 H912.0" fill="none" stroke="#2e2e2e" stroke-width="1.6"/><rect x="907.8" y="52.300000000000004" width="2.4" height="4" fill="#d6d6d6"/><circle cx="908.4" cy="83" r="5.2" fill="none" stroke="#bdbdbd" stroke-width="1" stroke-dasharray="1 0.9"/><circle cx="908.4" cy="83" r="3.3" fill="#e2e2e2"/><path d="M903.1999999999999 105.4 H914.0" stroke="#d6d6d6" stroke-width="0.7"/><path d="M903.1999999999999 108.8 H914.0" stroke="#d6d6d6" stroke-width="1.1"/><path d="M903.1999999999999 112.5 H914.0" stroke="#d6d6d6" stroke-width="1.7"/><circle cx="906.8" cy="125.6" r="3.8" fill="#c8c8c8"/><circle cx="910.0" cy="128.4" r="3.8" fill="#8a8a8a" fill-opacity="0.85" stroke="#b8b8b8" stroke-width="0.6"/><path d="M902.8 153 C902.8 149.6 907.4 147.6 911.0 148.4 C914.4 149.2 914.8 152.6 912.4 153 C910.4 153.2 911.0 155.4 908.4 155.8 C905.4 156.2 902.8 155 902.8 153 Z" fill="#d6d6d6"/><circle cx="905.4" cy="152.4" r="0.9" fill="#4a4a4a"/><circle cx="907.4" cy="150" r="0.9" fill="#4a4a4a"/><circle cx="910.6" cy="150.2" r="0.9" fill="#4a4a4a"/><circle cx="906.8" cy="154.2" r="0.9" fill="#4a4a4a"/><defs><linearGradient id="cg" x1="0" x2="1" y1="0" y2="1"><stop offset="0" stop-color="#eee"/><stop offset="1" stop-color="#555"/></linearGradient></defs><path d="M904.0 165.39999999999998 C909.4 165.39999999999998 913.1999999999999 169.6 913.1999999999999 174.79999999999998 H904.0 Z" fill="url(#cg)" stroke="#d6d6d6" stroke-width="0.8"/><path d="M904.0 165.39999999999998 V174.79999999999998" stroke="#eee" stroke-width="1.4"/><rect x="904.6" y="193.0" width="7.6" height="7.6" fill="none" stroke="#d6d6d6" stroke-width="0.8" stroke-dasharray="1.2 0.8"/><rect x="903.5" y="191.9" width="2.2" height="2.2" fill="#d6d6d6"/><rect x="903.5" y="199.50000000000003" width="2.2" height="2.2" fill="#d6d6d6"/><rect x="911.0999999999999" y="191.9" width="2.2" height="2.2" fill="#d6d6d6"/><rect x="911.0999999999999" y="199.50000000000003" width="2.2" height="2.2" fill="#d6d6d6"/><path d="M903.8 209.4 V219.4" stroke="#d6d6d6" stroke-width="1"/><rect x="905.1999999999999" y="210.8" width="4.6" height="2.8" fill="#d6d6d6"/><rect x="905.1999999999999" y="215.20000000000002" width="8" height="2.8" fill="#d6d6d6"/><rect x="903.6" y="227.7" width="6" height="6" fill="#d6d6d6"/><rect x="907.1999999999999" y="231.3" width="6" height="6" fill="#8a8a8a" stroke="#d6d6d6" stroke-width="0.9"/><text x="902.0" y="261.4" font-family="Liberation Serif,serif" font-style="italic" font-size="11" fill="#ababab" letter-spacing="-0.4">svg</text><circle cx="906.8" cy="286.4" r="2.6" fill="none" stroke="#d6d6d6" stroke-width="1.9" stroke-dasharray="1.3 0.75"/><circle cx="906.8" cy="286.4" r="1.9" fill="none" stroke="#d6d6d6" stroke-width="1"/><circle cx="911.6" cy="282" r="1.7" fill="none" stroke="#d6d6d6" stroke-width="1.1"/></svg>
</div><!--DOCK_E-->
<!--CTRL_S--><div id="ctrlitems">
<div class="abs" style="left:98px;top:0px;width:10.00px;height:11.7px;background:#424242"></div>
<div class="abs" style="left:125.5px;top:0px;width:10.50px;height:11.7px;background:#424242"></div>
<div class="abs" style="left:162px;top:0px;width:11.00px;height:11.7px;background:#424242"></div>
<div class="abs" style="left:174px;top:0px;width:31.00px;height:11.7px;background:#424242"></div>
<div class="abs" style="left:206px;top:0px;width:10.00px;height:11.7px;background:#424242"></div>
<div class="abs" style="left:220px;top:0px;width:59.00px;height:12.1px;background:#7f7f7f"></div>
<div class="abs" style="left:279.5px;top:0px;width:9.50px;height:11.7px;background:#464646"></div>
<div class="abs" style="left:335px;top:0px;width:35.00px;height:11.7px;background:#424242"></div>
<div class="abs" style="left:371px;top:0px;width:10.00px;height:11.7px;background:#424242"></div>
<div class="abs" style="left:440px;top:0px;width:122.50px;height:11.7px;background:#424242"></div>
<div class="abs" style="left:563.2px;top:0px;width:9.80px;height:11.7px;background:#424242"></div>
<div class="abs" style="left:578.5px;top:0px;width:61.50px;height:11.7px;background:#424242"></div>
<div class="abs" style="left:640.7px;top:0px;width:9.80px;height:11.7px;background:#424242"></div>
<div class="abs" style="left:654px;top:0px;width:10.50px;height:11.7px;background:#424242"></div>
<div class="abs" style="left:665px;top:0px;width:32.00px;height:11.7px;background:#424242"></div>
<div class="abs" style="left:697.7px;top:0px;width:10.30px;height:11.7px;background:#424242"></div>
<span class="t" style="left:1px;top:2.4px;font-size:8.2px;transform:scaleX(0.922);font-weight:400;color:#b8b8b8;">テキスト</span>
<span class="t u" style="left:144.2px;top:1.5px;font-size:8.2px;transform:scaleX(1.119);font-weight:500;">線 :</span>
<span class="t u" style="left:294.3px;top:1.5px;font-size:8.2px;font-weight:500;">不透明度 :</span>
<span class="t" style="left:337px;top:2.1px;font-size:8.8px;transform:scaleX(1.023);font-weight:500;">100%</span>
<span class="t u" style="left:416px;top:1.5px;font-size:8.2px;transform:scaleX(1.058);font-weight:500;">文字 :</span>
<span class="t" style="left:458px;top:1.9px;font-size:8.8px;transform:scaleX(0.871);font-weight:500;">HGS 明朝 E</span>
<span class="t" style="left:582.5px;top:1.9px;font-size:8.8px;font-weight:500;">-</span>
<span class="t" style="left:668px;top:1.9px;font-size:8.8px;transform:scaleX(1.093);font-weight:500;">80 pt</span>
<span class="t u" style="left:713.5px;top:1.5px;font-size:8.2px;transform:scaleX(0.969);font-weight:500;">段落</span>
<span class="t u" style="left:733.5px;top:1.5px;font-size:8.2px;transform:scaleX(0.965);font-weight:500;">エリア内文字 :</span>
<span class="t u" style="left:847.5px;top:1.9px;font-size:7.8px;transform:scaleX(1.031);font-weight:bold;color:#f0f0f0;">整列</span>
<span class="t u" style="left:872px;top:1.9px;font-size:7.8px;transform:scaleX(0.969);font-weight:bold;color:#f0f0f0;">変形</span>
<span class="t" style="left:0px;top:22.2px;font-size:7.6px;transform:scaleX(0.940);font-weight:400;color:#cfcfcf;">名称未設定</span>
<span class="t" style="left:37.6px;top:22.3px;font-size:7.6px;font-weight:400;color:#cfcfcf;">-3*</span>
<span class="t" style="left:50.4px;top:22.3px;font-size:7.0px;font-weight:400;color:#cfcfcf;">@</span>
<span class="t" style="left:58px;top:22.3px;font-size:7.6px;transform:scaleX(0.971);font-weight:400;color:#cfcfcf;">24.51</span>
<span class="t" style="left:78.4px;top:22.3px;font-size:7.6px;transform:scaleX(0.853);font-weight:400;color:#cfcfcf;">%</span>
<span class="t" style="left:85px;top:22.3px;font-size:7.6px;transform:scaleX(0.955);font-weight:400;color:#cfcfcf;">(CMYK/</span>
<span class="t" style="left:111.4px;top:22.2px;font-size:7.6px;transform:scaleX(0.766);font-weight:400;color:#cfcfcf;">プレビュー)</span>
<svg class="abs" style="left:0;top:0" width="960" height="16" viewBox="0 0 960 16">
<rect x="84.3" y="-1" width="12.2" height="12.6" fill="#000" stroke="#b0b0b0" stroke-width="0.9"/><path d="M100.6 4.1 L102.8 6.3 L105.0 4.1" fill="none" stroke="#e0e0e0" stroke-width="1.2"/><rect x="112.3" y="-1" width="11.6" height="12.4" fill="#fff"/><rect x="116" y="3.2" width="4.4" height="4.4" fill="#4a4a4a" stroke="#222" stroke-width="0.6"/><path d="M112.6 11.2 L123.6 0" stroke="#e81010" stroke-width="1.5"/><path d="M128.4 4.1 L130.6 6.3 L132.79999999999998 4.1" fill="none" stroke="#e0e0e0" stroke-width="1.2"/><path d="M165.3 4.6 L167.5 2.4 L169.7 4.6 M165.3 8.2 L167.5 10.4 L169.7 8.2" fill="none" stroke="#d0d0d0" stroke-width="1.1"/><path d="M208.4 4.1 L210.6 6.3 L212.79999999999998 4.1" fill="none" stroke="#e0e0e0" stroke-width="1.2"/><path d="M281.8 4.1 L284 6.3 L286.2 4.1" fill="none" stroke="#5e5e5e" stroke-width="1.2"/><path d="M374.6 3 L377 5.4 L374.6 7.8" fill="none" stroke="#e0e0e0" stroke-width="1.2"/><circle cx="398.7" cy="6" r="5.6" fill="#8e8e8e" stroke="#cfcfcf" stroke-width="0.9"/><path d="M395.5 2.5 C397 4 396 6 398 7 C400 8 399 10 400.5 11 M400 1 C399 3 402 4 403.5 4" stroke="#d8d8d8" stroke-width="1.2" fill="none"/><circle cx="444.2" cy="5.4" r="2.4" fill="none" stroke="#c8c8c8" stroke-width="1"/><path d="M446 7.2 L448 9.4" stroke="#c8c8c8" stroke-width="1.1"/><path d="M449.6 5.6 L451.2 7.2 L452.8 5.6" fill="none" stroke="#c8c8c8" stroke-width="0.9"/><path d="M565.5999999999999 4.1 L567.8 6.3 L570.0 4.1" fill="none" stroke="#e0e0e0" stroke-width="1.2"/><path d="M642.5999999999999 4.1 L644.8 6.3 L647.0 4.1" fill="none" stroke="#e0e0e0" stroke-width="1.2"/><path d="M700.5999999999999 4.1 L702.8 6.3 L705.0 4.1" fill="none" stroke="#e0e0e0" stroke-width="1.2"/><path d="M657.1 4.6 L659.3 2.4 L661.5 4.6 M657.1 8.2 L659.3 10.4 L661.5 8.2" fill="none" stroke="#d0d0d0" stroke-width="1.1"/><path d="M793.5 1.2 H801.5 M793.5 3.4 H801.5 M793.5 5.6 H801.5" stroke="#bdbdbd" stroke-width="1"/><path d="M803.6 5.6 L805.4 7.4 L807.2 5.6" fill="none" stroke="#c8c8c8" stroke-width="0.9"/><path d="M819.4 3 C822 1.2 826 1.2 828.6 3 L826.8 9.6 H821.2 Z M822.6 2 L823.2 9.6 M825.4 2 L824.8 9.6" fill="none" stroke="#c8c8c8" stroke-width="0.9"/><path d="M833.5999999999999 4.1 L835.8 6.3 L838.0 4.1" fill="none" stroke="#e0e0e0" stroke-width="1.2"/><rect x="902.8" y="2.2" width="2" height="2" fill="#6a6a6a"/><rect x="902.8" y="7.199999999999999" width="2" height="2" fill="#6a6a6a"/><rect x="907.6" y="2.2" width="2" height="2" fill="#6a6a6a"/><rect x="907.6" y="7.199999999999999" width="2" height="2" fill="#6a6a6a"/><rect x="919.6" y="0.6" width="2.2" height="8.8" fill="#e8e8e8"/><path d="M923 3 H926.4 A1.9 1.9 0 0 1 926.4 7 H923" fill="none" stroke="#e8e8e8" stroke-width="1.3"/><path d="M933.4 4.3999999999999995 L935.6 6.6 L937.8000000000001 4.3999999999999995" fill="none" stroke="#6a6a6a" stroke-width="1.2"/><path d="M950.8 2.6 H951.8 M953 2.6 H958 M950.8 5.4 H951.8 M953 5.4 H958 M950.8 8.2 H951.8 M953 8.2 H958" stroke="#e0e0e0" stroke-width="1.1"/></svg>
<svg class="abs" style="left:149px;top:20px" width="12" height="12" viewBox="0 0 12 12"><path d="M3.6 3.2 L8 7.6 M8 3.2 L3.6 7.6" stroke="#e6e6e6" stroke-width="1.2"/></svg>
</div><!--CTRL_E-->
</body>
</html>
